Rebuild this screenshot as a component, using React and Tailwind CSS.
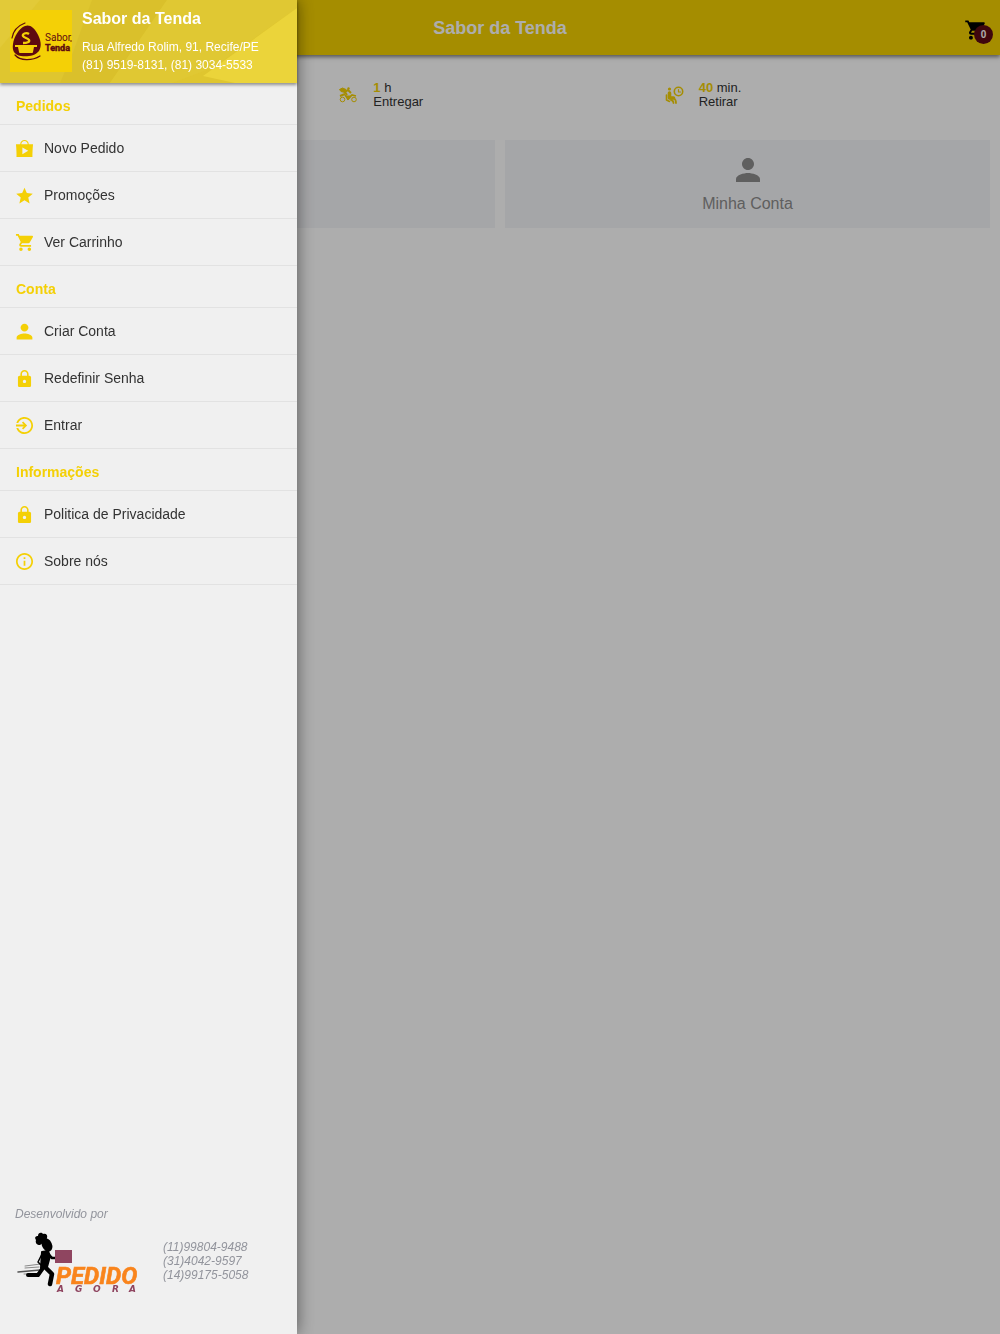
import React from 'react';
import {
    IoMdAppstore,
    IoMdStar,
    IoMdCart,
    IoMdPerson,
    IoMdLock,
    IoMdLogIn,
    IoMdInformationCircleOutline,
} from 'react-icons/io';

const menu = [
    {
        title: 'Pedidos',
        items: [
            { label: 'Novo Pedido', icon: IoMdAppstore },
            { label: 'Promoções', icon: IoMdStar },
            { label: 'Ver Carrinho', icon: IoMdCart },
        ],
    },
    {
        title: 'Conta',
        items: [
            { label: 'Criar Conta', icon: IoMdPerson },
            { label: 'Redefinir Senha', icon: IoMdLock },
            { label: 'Entrar', icon: IoMdLogIn },
        ],
    },
    {
        title: 'Informações',
        items: [
            { label: 'Politica de Privacidade', icon: IoMdLock },
            { label: 'Sobre nós', icon: IoMdInformationCircleOutline },
        ],
    },
];

const phones = ['(11)99804-9488', '(31)4042-9597', '(14)99175-5058'];

const StoreLogo = () => (
    <svg viewBox="0 0 62 62" className="w-[62px] h-[62px] flex-shrink-0">
        <rect width="62" height="62" fill="#f4d006" />
        <path d="M15 16c5-2 9 2 12 7 4 7 5 13 2 18-4 5-12 6-18 5-7-1-9-6-8-12 1-7 6-16 12-18z" fill="#5e0a10" />
        <path d="M2 28c1-6 5-12 13-15M5 45c5 6 17 6 25 1" fill="none" stroke="#5e0a10" strokeWidth="1.2" strokeLinecap="round" />
        <path d="M19 24c-3-2-7 0-6 2 1 2 5 2 6 4 1 2-2 3-6 3" fill="none" stroke="#f4d006" strokeWidth="2.4" />
        <path d="M5 35h22v2h-3l-1 5c0 1-1 1-2 1H11c-1 0-2 0-2-1l-1-5H5z" fill="#f4d006" />
        <text x="35" y="31" fontSize="10" fontFamily="Roboto, sans-serif" fill="#5e0a10">Sabor</text>
        <text x="35" y="41" fontSize="9" fontWeight="700" fontFamily="Roboto, sans-serif" fill="#5e0a10" stroke="#5e0a10" strokeWidth="0.4">Tenda</text>
        <circle cx="61" cy="31" r="0.8" fill="#5e0a10" />
    </svg>
);

const DeveloperLogo = () => (
    <svg viewBox="0 0 124 62" className="w-[124px] h-[62px] flex-shrink-0">
        <g stroke="#8a8a8a" strokeLinecap="round">
            <path d="M10 34l16-2" strokeWidth="1" />
            <path d="M3 40l22-2" strokeWidth="1.600" stroke="#555" />
            <path d="M10 36l14-1M9 42h14" strokeWidth="1" />
        </g>
        {/* chef hat and head */}
        <path d="M21 8c-2-3 0-4 2-4 0-4 4-4 5-2 3-1 5 1 4 4l-1 3-6 4c-3 0-5-2-4-5z" fill="#000" />
        <ellipse cx="32" cy="13" rx="5" ry="7" transform="rotate(-25 32 13)" fill="#000" />
        {/* body */}
        <path d="M27 20l6-1 2 5-3 11-6 1z" fill="#000" stroke="#000" strokeWidth="2" strokeLinejoin="round" />
        <g fill="none" stroke="#000" strokeLinecap="round" strokeLinejoin="round">
            <path d="M34 23l3 3h5" strokeWidth="2.500" />
            <path d="M27 22l-4 8 3 3" strokeWidth="1.500" />
            <path d="M28 36l-5 7H13" strokeWidth="4" />
            <path d="M30 35l7 7-2 10" strokeWidth="4.500" />
        </g>
        <rect x="40" y="18" width="17" height="13" fill="#8f4560" />
        <text x="41" y="52" fontSize="24" fontWeight="700" fontStyle="italic" fontFamily="Roboto, sans-serif" fill="#f9841c" stroke="#f9841c" strokeWidth="0.6">
            PEDIDO
        </text>
        <text x="42 60 78 97 114" y="60" fontSize="9" fontWeight="700" fontStyle="italic" fontFamily="'DejaVu Sans', sans-serif" fill="#8f4560">
            AGORA
        </text>
    </svg>
);

const DeliveryIcon = () => (
    <svg viewBox="0 0 22 22" className="w-[22px] h-[22px] flex-shrink-0" fill="none" stroke="#f4d006">
        <circle cx="5.500" cy="15.500" r="2.300" strokeWidth="1" />
        <circle cx="17" cy="15.500" r="2.300" strokeWidth="1" />
        <path d="M2.500 5.500l3-1.500 3.500 1.500-1 3-4-1z" fill="#f4d006" />
        <circle cx="11.500" cy="4.500" r="1.200" fill="#f4d006" stroke="none" />
        <path d="M8 8l3-2 3 3M3 12l5-2M8 8l2 3" strokeWidth="2" />
        <path d="M8 11l3 4 4-4 4 1" strokeWidth="1.600" />
        <path d="M9 12h5l-3 4z" fill="#f4d006" />
    </svg>
);

const PickupIcon = () => (
    <svg viewBox="0 0 22 22" className="w-[22px] h-[22px] flex-shrink-0" fill="none" stroke="#f4d006" strokeLinecap="round" strokeLinejoin="round">
        <circle cx="15.500" cy="7.500" r="4.200" strokeWidth="1.600" />
        <path d="M15.500 5.500v2.500H17.500" strokeWidth="1.200" />
        <circle cx="6.500" cy="5" r="1.600" fill="#f4d006" stroke="none" />
        <path d="M6.500 9v5h4" strokeWidth="3.600" />
        <path d="M3.500 11v5l3 1.500" strokeWidth="1.600" />
        <path d="M8 16c2 0 2 1 2.500 3M10.500 14c2 1 2.500 2 2.500 5" strokeWidth="1.800" />
    </svg>
);

const TimeInfo = ({ icon, value, unit, label, className }) => (
    <div className={`flex items-center gap-[14px] ${className || ''}`}>
        {icon}
        <p className="text-[13px] leading-[14px] text-[#333]">
            <span className="font-bold text-[#f4d006]">{value}</span> {unit}
            <br />
            {label}
        </p>
    </div>
);

const Drawer = () => (
    <aside className="fixed inset-y-0 left-0 w-[297px] bg-[#f0f0f0] flex flex-col shadow-[0_0_16px_rgba(0,0,0,0.5)]">
        <div className="relative h-[83px] flex-shrink-0 bg-[#dfc62f] shadow-[0_2px_3px_rgba(0,0,0,0.4)]">
            <svg viewBox="0 0 297 83" preserveAspectRatio="none" className="absolute inset-0 w-full h-full">
                <path d="M0 0h40L0 48z" fill="#e2ca38" />
                <path d="M72 55l20-55h75L110 83H60z" fill="#dac02b" />
                <path d="M167 0h130v8L212 68l-40 15h-62z" fill="#e0c833" />
                <path d="M297 8v75h-62l-32-7z" fill="#ebd43a" />
            </svg>
            <div className="relative flex gap-[10px] pl-[10px] pt-[10px] text-white">
                <StoreLogo />
                <div>
                    <h2 className="text-base leading-[18px] font-bold">Sabor da Tenda</h2>
                    <p className="mt-[10px] text-xs leading-[18px]">
                        Rua Alfredo Rolim, 91, Recife/PE
                        <br />
                        (81) 9519-8131, (81) 3034-5533
                    </p>
                </div>
            </div>
        </div>
        <nav>
            {menu.map((section) => (
                <section key={section.title}>
                    <h3 className="h-[42px] flex items-center pt-1 pl-4 border-b border-[#e2e2e2] text-sm font-bold text-[#f4d006]">
                        {section.title}
                    </h3>
                    <ul>
                        {section.items.map(({ label, icon: Icon }) => (
                            <li key={label} className="border-b border-[#e2e2e2]">
                                <a href="#" className="h-[46px] flex items-center gap-[9px] pl-[14px] text-sm text-[#333]">
                                    <Icon size={21} className="text-[#f4d006]" />
                                    {label}
                                </a>
                            </li>
                        ))}
                    </ul>
                </section>
            ))}
        </nav>
        <footer className="mt-auto px-[15px] pb-10 text-xs italic text-[#92949c]">
            <p className="leading-4">Desenvolvido por</p>
            <div className="mt-[10px] flex gap-6">
                <DeveloperLogo />
                <ul className="mt-2 leading-[14px]">
                    {phones.map((phone) => (
                        <li key={phone}>{phone}</li>
                    ))}
                </ul>
            </div>
        </footer>
    </aside>
);

const App = () => {
    return (
        <div className="min-h-screen bg-white font-['Liberation_Sans',Arial,sans-serif]">
            <header className="relative h-[55px] bg-[#f4d000] flex items-center justify-center shadow-[0_2px_4px_rgba(0,0,0,0.5)]">
                <h1 className="text-lg font-bold text-white">Sabor da Tenda</h1>
                <button type="button" aria-label="Carrinho" className="absolute right-[7px] top-4 w-[30px] h-7">
                    <IoMdCart size={24} className="text-black" />
                    <span className="absolute right-0 bottom-0 w-[19px] h-[19px] rounded-full bg-[#5e0a14] text-white text-[10px] leading-[19px] font-bold text-center">
                        0
                    </span>
                </button>
            </header>
            <main>
                <div className="grid grid-cols-3 px-3 pt-[26px]">
                    <TimeInfo className="col-start-2" icon={<DeliveryIcon />} value="1" unit="h" label="Entregar" />
                    <TimeInfo icon={<PickupIcon />} value="40" unit="min." label="Retirar" />
                </div>
                <div className="grid grid-cols-2 gap-[10px] px-[10px] mt-[31px]">
                    <div className="bg-[#f4f5f8]" />
                    <a href="#" className="h-[88px] bg-[#f4f5f8] flex flex-col items-center pt-[14px] text-[#8c8c8c]">
                        <IoMdPerson size={32} />
                        <span className="mt-2 text-base leading-5">Minha Conta</span>
                    </a>
                </div>
            </main>
            <div className="fixed inset-0 bg-black/32" />
            <Drawer />
        </div>
    );
};

export default App;
